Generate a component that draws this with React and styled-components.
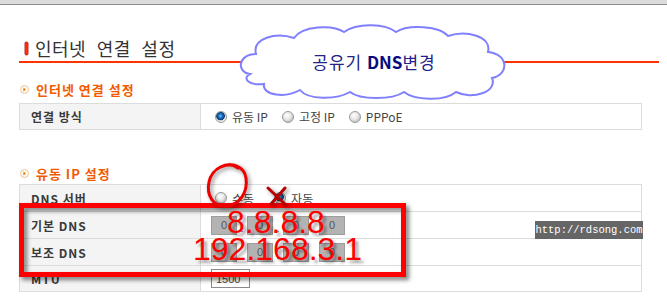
import React from "react";
import styled, { createGlobalStyle } from "styled-components";

const GlobalStyle = createGlobalStyle`
  body {
    margin: 0;
    background: #fff;
    font-family: "Noto Sans CJK KR", "Noto Sans", sans-serif;
    color: #333;
  }
  * {
    box-sizing: border-box;
  }
`;

const Wrapper = styled.div`
  position: relative;
  width: 667px;
  height: 298px;
  overflow: hidden;
`;

const TopBar = styled.div`
  height: 5px;
  background: #dcdcdc;
  border-bottom: 1px solid #8c8c8c;
`;

const Content = styled.div`
  padding: 0 8px 0 19px;
`;

const TitleRow = styled.div`
  height: 56px;
  display: flex;
  align-items: flex-end;
  padding: 0 0 2px 6px;
`;

const RedBar = styled.span`
  width: 3px;
  height: 13px;
  margin: 0 7px 4px 0;
  border-radius: 2px;
  background: #ff2a00;
  box-shadow: 0 0 0 0.5px #a33;
`;

const Title = styled.h1`
  margin: 0;
  font-size: 18px;
  line-height: 22px;
  font-weight: 400;
  letter-spacing: 0.5px;
  word-spacing: 6px;
  color: #333;
`;

const TitleLine = styled.div`
  width: 640px;
  height: 2px;
  background: #ff3300;
`;

const SectionHeader = styled.h2`
  margin: ${(p) => p.$top}px 0 0 1px;
  height: 16px;
  display: flex;
  align-items: center;
  gap: 7px;
  font-size: 13px;
  font-weight: 700;
  letter-spacing: 1px;
  color: #f25a00;
`;

const Table = styled.div`
  margin-top: ${(p) => p.$top}px;
  width: 623px;
  border: 1px solid #dcdcdc;
  border-bottom: none;
`;

const Row = styled.div`
  display: grid;
  grid-template-columns: 180px 1fr;
  height: ${(p) => p.$h || 27}px;
  border-bottom: 1px solid #dcdcdc;
`;

const Label = styled.div`
  display: flex;
  align-items: center;
  padding-left: 11px;
  background: #f4f4f4;
  font-size: 12px;
  font-weight: 700;
  letter-spacing: 1px;
  color: #3a3a3a;
`;

const Value = styled.div`
  display: flex;
  align-items: center;
  padding-left: 10px;
  border-left: 1px solid #dcdcdc;
  font-size: 12px;
  color: #444;
`;

const Option = styled.label`
  display: flex;
  align-items: center;
  gap: 5px;
  margin: 0 ${(p) => p.$gap}px 0 4px;
  white-space: nowrap;
`;

const Radio = styled.span`
  width: 12px;
  height: 12px;
  border-radius: 50%;
  border: 1px solid #9a9a9a;
  background: ${(p) =>
    p.$checked
      ? "radial-gradient(circle at 45% 40%, #7ec3ff 0, #1c6fc0 2px, #0b3e78 4px, #d8d8d8 4.6px, #f5f5f5 6px)"
      : "radial-gradient(circle at 40% 35%, #ffffff 0, #e6e6e6 4px, #c8c8c8 6px)"};
`;

const IpBox = styled.span`
  width: 26px;
  height: 19px;
  display: flex;
  align-items: center;
  justify-content: center;
  background: #b3b3b3;
  border: 1px solid #9d9d9d;
  font-family: "Liberation Sans", sans-serif;
  font-size: 11px;
  color: #555;
`;

const Dot = styled.span`
  width: 10px;
  text-align: center;
  align-self: flex-end;
  padding-bottom: 4px;
  font-family: "Liberation Sans", sans-serif;
  font-size: 11px;
`;

const MtuInput = styled.span`
  width: 39px;
  height: 19px;
  display: flex;
  align-items: center;
  padding-left: 4px;
  border: 1px solid #8a8a8a;
  font-family: "Liberation Sans", sans-serif;
  font-size: 11px;
  color: #444;
`;

const Cloud = styled.div`
  position: absolute;
  left: 232px;
  top: 22px;
  width: 280px;
  height: 78px;
  display: flex;
  align-items: center;
  justify-content: center;
  padding: 0 0 0 4px;
  font-size: 17px;
  letter-spacing: 1px;
  color: #22228a;

  svg {
    position: absolute;
    inset: 0;
    z-index: 0;
  }
  span {
    position: relative;
    z-index: 1;
  }
  b {
    color: #0a0a80;
    letter-spacing: 0;
  }
`;

const MarkBox = styled.div`
  position: absolute;
  left: 19px;
  top: 203px;
  width: 387px;
  height: 74px;
  border: 5px solid #ff0000;
  filter: drop-shadow(3px 3px 2px rgba(0, 0, 0, 0.5));
`;

const BigNumber = styled.div`
  position: absolute;
  left: ${(p) => p.$x}px;
  top: ${(p) => p.$y}px;
  font-family: "Liberation Sans", sans-serif;
  font-size: 32px;
  line-height: 32px;
  color: #ff0000;
  text-shadow: 3px 3px 3px rgba(0, 0, 0, 0.35);
  white-space: nowrap;
`;

const Scribble = styled.svg`
  position: absolute;
  left: 0;
  top: 0;
  pointer-events: none;
  filter: drop-shadow(2px 2px 2px rgba(0, 0, 0, 0.45));
`;

const Watermark = styled.div`
  position: absolute;
  left: 535px;
  top: 221px;
  width: 108px;
  height: 18px;
  display: flex;
  align-items: center;
  justify-content: center;
  background: rgba(85, 85, 85, 0.9);
  font-family: "Liberation Mono", monospace;
  font-size: 10.5px;
  color: #fff;
`;

const ArrowIcon = () => (
  <svg width="9" height="9" viewBox="0 0 9 9">
    <circle cx="4.5" cy="4.5" r="4" fill="#fffaf2" stroke="#e8c89a" />
    <path d="M3.4 2.5 L6 4.5 L3.4 6.5 Z" fill="#f07800" />
  </svg>
);

const RadioOption = ({ checked, gap = 10, children }) => (
  <Option $gap={gap}>
    <Radio $checked={checked} />
    {children}
  </Option>
);

const IpField = () => (
  <>
    <IpBox>0</IpBox>
    <Dot>.</Dot>
    <IpBox>0</IpBox>
    <Dot>.</Dot>
    <IpBox>0</IpBox>
    <Dot>.</Dot>
    <IpBox>0</IpBox>
  </>
);

export default function App() {
  return (
    <>
      <GlobalStyle />
      <Wrapper>
        <TopBar />
        <Content>
          <TitleRow>
            <RedBar />
            <Title>인터넷 연결 설정</Title>
          </TitleRow>
          <TitleLine />

          <SectionHeader $top={18}>
            <ArrowIcon />
            인터넷 연결 설정
          </SectionHeader>
          <Table $top={6}>
            <Row $h={26}>
              <Label>연결 방식</Label>
              <Value>
                <RadioOption checked>유동 IP</RadioOption>
                <RadioOption>고정 IP</RadioOption>
                <RadioOption>PPPoE</RadioOption>
              </Value>
            </Row>
          </Table>

          <SectionHeader $top={35}>
            <ArrowIcon />
            유동 IP 설정
          </SectionHeader>
          <Table $top={3}>
            <Row>
              <Label>DNS 서버</Label>
              <Value>
                <RadioOption gap={16}>수동</RadioOption>
                <RadioOption checked>자동</RadioOption>
              </Value>
            </Row>
            <Row>
              <Label>기본 DNS</Label>
              <Value>
                <IpField />
              </Value>
            </Row>
            <Row>
              <Label>보조 DNS</Label>
              <Value>
                <IpField />
              </Value>
            </Row>
            <Row $h={26}>
              <Label>MTU</Label>
              <Value>
                <MtuInput>1500</MtuInput>
              </Value>
            </Row>
          </Table>
        </Content>

        <Cloud>
          <svg width="280" height="78" viewBox="-4 -4 280 78">
            <path
              d="M14 48 C0 46 2 28 20 28 C16 12 40 6 58 12 C66 0 96 -2 108 6 C122 -4 150 -2 160 6 C172 -2 204 0 212 10 C230 4 256 10 252 26 C272 28 274 48 256 52 C262 66 236 74 220 66 C208 76 178 74 168 66 C156 74 124 74 114 66 C100 74 72 74 64 64 C50 72 26 70 28 58 C12 60 6 52 14 48 Z"
              fill="#fff"
              stroke="#8080ff"
              strokeWidth="2"
            />
          </svg>
          <span>
            공유기 <b>DNS</b>변경
          </span>
        </Cloud>

        <MarkBox />
        <BigNumber $x={227} $y={206}>8.8.8.8</BigNumber>
        <BigNumber $x={193} $y={233}>192.168.3.1</BigNumber>

        <Scribble width="667" height="298" viewBox="0 0 667 298">
          <path
            d="M238 168 C228 160 212 168 209 182 C206 196 214 207 226 206 C240 205 248 192 246 178 C244 166 232 162 221 167"
            fill="none"
            stroke="#ee0000"
            strokeWidth="3"
            strokeLinecap="round"
          />
          <path
            d="M268 188 L286 205 M285 188 L271 204"
            fill="none"
            stroke="#b80000"
            strokeWidth="3"
            strokeLinecap="round"
          />
        </Scribble>

        <Watermark>http://rdsong.com</Watermark>
      </Wrapper>
    </>
  );
}
